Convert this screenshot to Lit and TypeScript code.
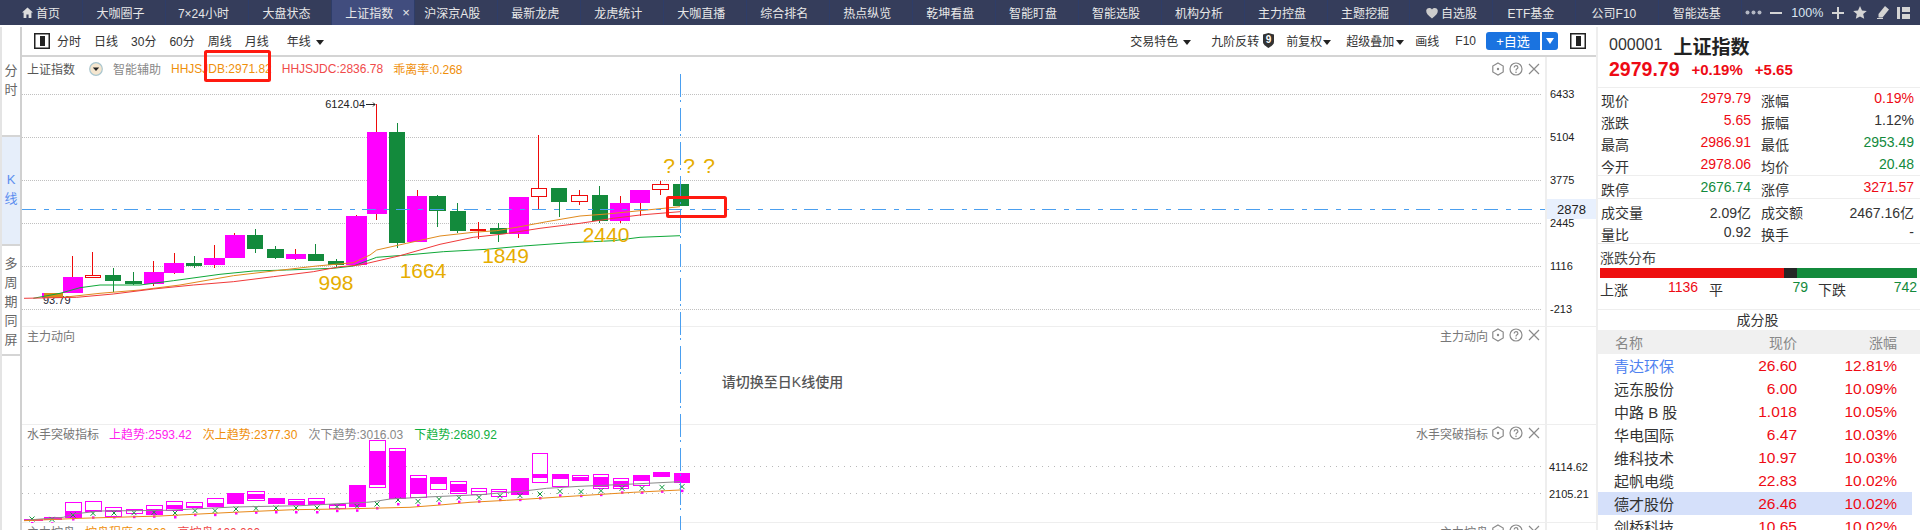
import { LitElement, html, css, svg } from "lit";
import { customElement } from "lit/decorators.js";

const MAG = "#ff00ff", GRN = "#138a3c", RED = "#ee0a0a", GOLD = "#e6ad00";
const X = (z: number) => z / 3;
const Y1 = (z: number) => 110 + z / 3;
const Y3 = (z: number) => 410 + z / 3;

type C = [string, number, number, number, number, number, number, number];
// type, left, right, top, bottom, wickX, wickTop, wickBottom (3x crop units)
const candles: C[] = [
  ["m", 127, 188, 549, 565, 157, 549, 565],
  ["m", 189, 249, 501, 549, 217, 438, 549],
  ["r", 255, 303, 495, 503, 277, 426, 503],
  ["g", 315, 363, 495, 513, 340, 474, 546],
  ["g", 375, 426, 513, 522, 400, 486, 525],
  ["m", 432, 492, 486, 522, 460, 453, 528],
  ["m", 492, 552, 459, 489, 523, 429, 492],
  ["g", 558, 606, 459, 468, 583, 438, 474],
  ["m", 612, 675, 444, 465, 643, 405, 474],
  ["m", 675, 735, 375, 444, 703, 369, 444],
  ["g", 741, 789, 375, 417, 766, 357, 429],
  ["g", 801, 852, 417, 444, 826, 408, 447],
  ["m", 858, 918, 432, 447, 886, 417, 450],
  ["g", 924, 972, 432, 453, 946, 402, 453],
  ["g", 984, 1032, 453, 465, 1009, 447, 472],
  ["m", 1038, 1101, 318, 465, 1069, 315, 465],
  ["m", 1101, 1161, 66, 312, 1130, -18, 330],
  ["g", 1167, 1215, 66, 399, 1192, 39, 414],
  ["m", 1221, 1281, 258, 396, 1252, 240, 396],
  ["g", 1287, 1338, 258, 303, 1312, 255, 351],
  ["g", 1350, 1398, 303, 363, 1372, 279, 369],
  ["r", 1410, 1458, 357, 363, 1435, 336, 387],
  ["g", 1470, 1521, 354, 372, 1495, 339, 396],
  ["m", 1527, 1587, 261, 372, 1555, 261, 384],
  ["r", 1593, 1641, 234, 261, 1615, 75, 297],
  ["g", 1653, 1701, 234, 276, 1678, 234, 321],
  ["r", 1713, 1764, 255, 276, 1738, 240, 285],
  ["g", 1776, 1824, 255, 333, 1798, 228, 339],
  ["m", 1830, 1890, 279, 333, 1861, 258, 339],
  ["m", 1890, 1950, 240, 279, 1922, 279, 318],
  ["r", 1956, 2007, 222, 240, 1981, 213, 255],
  ["g", 2019, 2067, 222, 288, 2041, 222, 288],
];

const pts = (a: number[][], fy: (n: number) => number) =>
  a.map(([x, y]) => `${X(x).toFixed(1)},${fy(y).toFixed(1)}`).join(" ");

const maRed = [[72,565],[230,562],[340,552],[460,537],[580,525],[700,515],[820,500],[940,485],[1020,470],[1080,465],[1200,437],[1320,403],[1420,382],[1510,372],[1620,355],[1740,340],[1840,325],[1920,315],[2040,305]];
const maOrg = [[190,562],[300,550],[420,540],[540,525],[700,497],[820,483],[950,468],[1060,458],[1110,435],[1130,420],[1220,400],[1320,378],[1420,367],[1490,362],[1560,350],[1640,335],[1740,318],[1820,312],[1940,300],[2040,290]];
const maGrn = [[100,565],[180,550],[240,533],[300,525],[420,525],[520,512],[660,493],[760,483],[860,480],[1000,475],[1060,468],[1130,442],[1220,435],[1330,425],[1460,418],[1570,408],[1710,398],[1840,392],[1920,382],[2040,377]];

const boxes: number[][] = [
  [72,130,330,336,330,336],[133,186,324,333,324,333],[195,245,280,327,306,327],[255,305,277,309,304,309],
  [316,366,295,325,304,310],[378,428,301,317,304,306],[438,488,289,319,300,318],[498,548,277,307,288,300],
  [558,610,280,297,290,294],[621,671,268,295,283,292],[681,731,253,286,253,286],[741,795,247,278,255,270],
  [804,854,267,286,267,284],[864,914,271,288,276,284],[925,977,268,288,276,285],[987,1037,285,299,285,290],
  [1047,1097,228,293,228,293],[1107,1157,94,239,126,228],[1168,1220,118,271,126,271],[1230,1280,199,269,207,256],
  [1290,1340,205,245,205,225],[1351,1403,217,255,225,250],[1414,1462,238,260,247,250],[1474,1522,241,265,246,250],
  [1533,1587,208,260,208,260],[1597,1646,133,223,195,207],[1657,1707,196,234,196,212],[1717,1767,199,218,204,213],
  [1780,1828,196,241,204,235],[1840,1888,208,240,216,235],[1900,1950,199,232,199,216],[1960,2012,190,206,190,202],
  [2023,2072,193,224,193,219],
];
const marks = [[97,330],[157,331],[220,318],[280,313],[341,312],[402,311],[463,310],[525,312],[585,305],[646,305],[707,300],[767,298],[828,297],[889,297],[950,297],[1011,293],[1072,292],[1132,285],[1193,273],[1255,277],[1316,271],[1377,266],[1438,265],[1499,260],[1560,260],[1621,255],[1681,247],[1743,248],[1804,245],[1865,238],[1926,238],[1986,235],[2047,233]];
const grayL = [[72,334],[190,325],[220,315],[300,306],[500,304],[700,294],[900,290],[1100,280],[1120,278],[1170,270],[1280,264],[1440,257],[1580,245],[1640,238],[1740,232],[1900,225],[2040,218]];
const orgL = [[72,335],[240,328],[480,321],[700,310],[880,302],[1020,300],[1230,295],[1320,288],[1410,280],[1520,274],[1620,268],[1740,260],[1900,250],[2040,243]];

const tabs = ["首页","大咖圈子","7×24小时","大盘状态","上证指数","沪深京A股","最新龙虎","龙虎统计","大咖直播","综合排名","热点纵览","乾坤看盘","智能盯盘","智能选股","机构分析","主力控盘","主题挖掘","自选股","ETF基金","公司F10","智能选基"];
const quote: [string, string, string, string, string, string][] = [
  ["现价","2979.79","r","涨幅","0.19%","r"],
  ["涨跌","5.65","r","振幅","1.12%","k"],
  ["最高","2986.91","r","最低","2953.49","g"],
  ["今开","2978.06","r","均价","20.48","g"],
];
const stocks: [string, string, string][] = [
  ["青达环保","26.60","12.81%"],["远东股份","6.00","10.09%"],["中路 B 股","1.018","10.05%"],["华电国际","6.47","10.03%"],
  ["维科技术","10.97","10.03%"],["起帆电缆","22.83","10.02%"],["德才股份","26.46","10.02%"],["剑桥科技","10.65","10.02%"],
];

const toolIcons = html`
  <svg width="14" height="14" viewBox="0 0 14 14" fill="none" stroke="#8a8a8a" stroke-width="1.2"><path d="M7 1l5.2 3v6L7 13l-5.2-3V4z"/><circle cx="7" cy="7" r="1.2" fill="#8a8a8a" stroke="none"/></svg>
  <svg width="14" height="14" viewBox="0 0 14 14" fill="none" stroke="#8a8a8a" stroke-width="1.2"><circle cx="7" cy="7" r="6"/><path d="M5.2 5.4c0-2.300 3.700-2.300 3.700 0 0 1.500-1.900 1.400-1.900 3"/><circle cx="7" cy="10.200" r=".8" fill="#8a8a8a" stroke="none"/></svg>
  <svg width="14" height="14" viewBox="0 0 14 14" fill="none" stroke="#8a8a8a" stroke-width="1.2"><path d="M2 2l10 10M12 2L2 12"/></svg>`;
const panelIcon = html`<svg class="pi" width="16" height="16" viewBox="0 0 16 16"><rect x=".75" y=".75" width="14.500" height="14.500" fill="#fff" stroke="#222" stroke-width="1.500"/><rect x="6" y="3" width="5" height="10" fill="#222"/></svg>`;
const grid = (ys: number[], dash: string, color: string) =>
  ys.map((y) => svg`<line x1="22" x2="1541" y1=${y + 0.5} y2=${y + 0.5} stroke=${color} stroke-dasharray=${dash}/>`);

@customElement("app-root")
export class AppRoot extends LitElement {
  static styles = css`
    :host { display: block; width: 1920px; height: 530px; overflow: hidden; background: #fff; position: relative;
      font-family: "Liberation Sans", "Noto Sans CJK SC", sans-serif; font-size: 12px; color: #333; }
    * { box-sizing: border-box; }
    .tabs { display: flex; height: 25px; background: #353d5b; color: #e8e8e8; align-items: stretch; }
    .tab { width: 82.97px; flex: none; display: flex; align-items: center; justify-content: center; gap: 3px;
      padding-right: 7px; border-right: 1px solid #2e3d68; white-space: nowrap; position: relative; }
    .tab.ic { padding-right: 0; }
    .tab.on { background: #414d7e; }
    .tab .x { position: absolute; right: 4px; top: 6px; font-size: 13px; line-height: 13px; }
    .chrome { flex: 1; display: flex; align-items: center; padding-left: 3px; color: #dbe6f2; }
    .chrome svg { flex: none; }
    .chrome span { margin: 0 9px 0 9px; font-size: 12.500px; }
    .gap { height: 2px; }
    .body { display: flex; height: 503px; }
    .side { width: 22px; flex: none; border-left: 2px solid #e4e4e4; border-right: 2px solid #d0d0d0; display: flex; flex-direction: column; }
    .side div { height: 109.500px; flex: none; display: flex; flex-direction: column; align-items: center; justify-content: center;
      gap: 6px; color: #666; font-size: 13px; line-height: 13px; border-bottom: 2px solid #d5d5d5; padding-bottom: 2px; }
    .side div.on { background: #e6eefa; color: #5b8def; }
    .side div.tall { padding-bottom: 0; padding-top: 3px; }
    .main { width: 1574px; flex: none; display: flex; flex-direction: column; position: relative; }
    .bar { height: 30px; flex: none; border-bottom: 2px solid #d4d4d4; display: flex; align-items: center; padding-left: 12px; padding-bottom: 1px; }
    .bar .pi { margin-right: 7px; display: block; }
    .bar .it { margin-left: 13px; }
    .bar .it:first-of-type { margin-left: 0; }
    .bar .sp { flex: 1; }
    .caret { display: inline-block; width: 0; height: 0; border: 4px solid transparent; border-top: 5px solid #222; border-bottom: 0; margin-left: 5px; vertical-align: middle; }
    .add { width: 54px; height: 18px; background: #1a73e0; color: #fff; border-radius: 3px 0 0 3px; display: flex; align-items: center; justify-content: center; font-size: 13px; margin-left: 10px; }
    .dd { width: 16px; height: 18px; background: #1a73e0; border-radius: 0 3px 3px 0; margin: 0 12px 0 2px; display: flex; align-items: center; justify-content: center; }
    .dd i { border: 4.500px solid transparent; border-top: 6px solid #fff; border-bottom: 0; }
    .pane { position: relative; flex: none; border-bottom: 1px solid #eee; }
    .p1 { height: 270px; } .p2 { height: 98px; } .p3 { height: 98px; } .p4 { flex: 1; border-bottom: 0; }
    .pane > svg { position: absolute; left: 0; top: 0; }
    .hd { position: relative; display: flex; align-items: center; height: 16px; padding: 0 55px 0 5px; white-space: nowrap; color: #777; }
    .hd .n { color: #555; margin-right: 14px; }
    .hd .v { margin-right: 11px; }
    .hd .sp { flex: 1; }
    .hd .ttl { color: #777; margin-right: 3px; }
    .tools { display: flex; gap: 4px; align-items: center; }
    .tip { position: absolute; left: 0; right: 50px; top: 47px; text-align: center; font-size: 14px; line-height: 16px; color: #555; font-weight: 500; padding-right: 3px; }
    .axis { position: absolute; top: 0; bottom: 0; right: 0; width: 51px; border-left: 2px solid #eee; }
    .over { position: absolute; left: 0; top: 0; pointer-events: none; }
    .panel { width: 324px; flex: none; border-left: 2px solid #eee; font-size: 14px; overflow: hidden; }
    .head { height: 61px; border-bottom: 1px solid #eee; padding: 6px 0 0 11px; }
    .head .l1 { display: flex; align-items: center; height: 24px; }
    .head .code { font-size: 16px; margin-right: 11px; }
    .head .nm { font-size: 19px; font-weight: 700; color: #222; }
    .head .l2 { display: flex; align-items: center; height: 24px; color: #ee0a14; font-weight: 700; }
    .head .pr { font-size: 19.500px; margin-right: 12px; }
    .head .ch { font-size: 15px; margin-right: 12px; }
    .qs { border-bottom: 1px solid #eee; padding-left: 3px; display: grid; grid-template-columns: 150px 153px; column-gap: 10px; grid-auto-rows: 22px; align-items: center; }
    .q1 { height: 88px; padding-top: 1px; } .q2 { height: 23px; padding-top: 2px; } .q3 { height: 45px; padding-top: 2px; }
    .cell { display: flex; justify-content: space-between; white-space: nowrap; }
    .r { color: #ee0a14; } .g { color: #138a3c; } .k { color: #333; }
    .dist { height: 66px; border-bottom: 1px solid #eee; padding: 4px 3px 0 2px; }
    .dist .t { height: 20px; line-height: 20px; color: #444; }
    .dist .b { height: 10px; display: flex; }
    .dist .b i { display: block; }
    .dist .row { display: grid; grid-template-columns: 98px 11px 99px 10px 99px; height: 22px; align-items: center; }
    .dist .row span { display: flex; justify-content: space-between; }
    .dist .row b { font-weight: 400; }
    .cf { height: 20px; line-height: 20px; text-align: center; padding-right: 3px; color: #333; }
    .th, .tr { display: grid; grid-template-columns: 112px 71px 100px; padding-left: 16px; align-items: center; }
    .th { height: 24px; background: #f0f0f0; color: #888; padding-left: 17px; grid-template-columns: 111px 71px 100px; }
    .tr { height: 23px; font-size: 15px; width: 314px; }
    .tr.sel { background: #d5e0fa; }
    .nr { text-align: right; }
    .tr .nr { color: #ee0a14; font-size: 15.500px; }
    .tr .bl { color: #4f82f0; }
  `;

  chart1() {
    return svg`<svg width="1574" height="270" viewBox="22 57 1574 270" font-family="Liberation Sans, Noto Sans CJK SC, sans-serif">
      ${grid([94,137,180,223,266,309], "1 1", "#c0c0c0")}
      <text x="365" y="108" text-anchor="end" font-size="11" fill="#222">6124.04</text>
      <path d="M366 104.500h9m-2-2l2 2-2 2" fill="none" stroke="#222"/>
      <text x="43" y="304" font-size="11" fill="#223">93.79</text>
      ${candles.map(([t, l, r, a, b, wx, wt, wb]) => {
        const col = t === "g" ? GRN : t === "r" ? RED : MAG;
        const wc = t === "g" ? GRN : RED;
        return svg`<g shape-rendering="crispEdges">
          <rect x=${Math.floor(X(wx))} y=${Y1(wt)} width="1" height=${(wb - wt) / 3} fill=${wc}/>
          ${t === "r"
            ? svg`<rect x=${X(l) + 0.5} y=${Y1(a) + 0.5} width=${(r - l) / 3 - 1} height=${(b - a) / 3 - 1} fill="#fff" stroke=${RED}/>`
            : svg`<rect x=${X(l)} y=${Y1(a)} width=${(r - l) / 3} height=${(b - a) / 3} fill=${col}/>`}
        </g>`;
      })}
      <rect x="44" y="293" width="18.500" height="4.500" fill="#d98a1a" shape-rendering="crispEdges"/>
      <polyline points=${pts(maGrn, Y1)} fill="none" stroke="#0fa838" stroke-width="1"/>
      <polyline points=${pts(maOrg, Y1)} fill="none" stroke="#e08a1e" stroke-width="1"/>
      <polyline points=${pts(maRed, Y1)} fill="none" stroke="#f03a3a" stroke-width="1"/>
      <g font-size="21" fill=${GOLD} text-anchor="middle">
        <text x="336" y="290">998</text>
        <text x="423" y="278">1664</text>
        <text x="505.500" y="263">1849</text>
        <text x="606" y="242">2440</text>
        <text x="669" y="173">?</text><text x="689" y="173">?</text><text x="709" y="173">?</text>
      </g>
      <g font-size="11" fill="#222">
        <text x="1550" y="98">6433</text><text x="1550" y="141">5104</text><text x="1550" y="184">3775</text>
        <text x="1550" y="227">2445</text><text x="1550" y="270">1116</text><text x="1550" y="313">-213</text>
      </g>
      <rect x="1547" y="199" width="49" height="20" fill="#e8f0fd"/>
      <text x="1557" y="214" font-size="13" fill="#222">2878</text>
    </svg>`;
  }

  chart3() {
    return svg`<svg width="1574" height="98" viewBox="22 426 1574 98" font-family="Liberation Sans, Noto Sans CJK SC, sans-serif">
      ${grid([467,494], "1 5", "#b8b8b8")}
      <g shape-rendering="crispEdges">
        ${boxes.map(([l, r, t, b, ft, fb]) => svg`
          <rect x=${Math.round(X(l)) + 0.5} y=${Math.round(Y3(t)) + 0.5} width=${Math.round((r - l) / 3) - 1} height=${Math.max(1, Math.round((b - t) / 3) - 1)} fill="#fff" stroke=${MAG}/>
          <rect x=${Math.round(X(l))} y=${Math.round(Y3(ft))} width=${Math.round((r - l) / 3)} height=${Math.round((fb - ft) / 3)} fill=${MAG}/>`)}
      </g>
      ${marks.map(([x, y]) => {
        const cx = Math.round(X(x)), cy = Y3(y);
        return svg`<path d="M${cx - 2.5} ${cy - 2.5}l5 5m0 -5l-5 5" stroke="#0f9a3c" fill="none"/>
          <rect x=${cx - 1} y=${cy + 3} width="2.500" height="2.500" fill=${MAG}/>`;
      })}
      <polyline points=${pts(grayL, Y3)} fill="none" stroke="#8a8a8a" stroke-width="1"/>
      <polyline points=${pts(orgL, Y3)} fill="none" stroke="#e8891a" stroke-width="1"/>
      <g font-size="11" fill="#222"><text x="1549" y="472">4114.62</text><text x="1549" y="499">2105.21</text></g>
    </svg>`;
  }

  overlay() {
    return svg`<svg class="over" width="1574" height="503" viewBox="22 27 1574 503">
      <line x1="22" x2="1546" y1="209.500" y2="209.500" stroke="#4a9ff0" stroke-dasharray="14 8 5 7"/>
      <line x1="680.500" x2="680.500" y1="74" y2="530" stroke="#4a9ff0" stroke-dasharray="23 3 2 6"/>
      <rect x="667.500" y="197.500" width="58" height="19" rx="1" fill="none" stroke="#ff1a10" stroke-width="3"/>
      <rect x="205.500" y="51.500" width="64" height="29" rx="1" fill="none" stroke="#ff1a10" stroke-width="3"/>
    </svg>`;
  }

  tabIcon(i: number) {
    if (i === 0) return html`<svg width="11" height="11" viewBox="0 0 11 11"><path d="M5.500 .5L0 5.500h1.600V11h2.800V7.500h2.200V11h2.800V5.500H11z" fill="#ddd"/></svg>`;
    if (i === 17) return html`<svg width="12" height="12" viewBox="0 0 12 12"><path d="M6 11.500C2 8.500 .2 6.500 .2 3.800.2 .9 4 -.2 6 2.400 8 -.2 11.800 .9 11.800 3.800c0 2.700-1.800 4.700-5.800 7.700z" fill="#ccc"/></svg>`;
    return "";
  }

  render() {
    return html`
      <div class="tabs">
        ${tabs.map((t, i) => html`<div class="tab ${i === 4 ? "on" : ""} ${i === 0 || i === 17 ? "ic" : ""}">${this.tabIcon(i)}${t}${i === 4 ? html`<span class="x">×</span>` : ""}</div>`)}
        <div class="chrome">
          <svg width="17" height="5" viewBox="0 0 17 5" fill="#b4b8c4"><circle cx="2.500" cy="2.500" r="2"/><circle cx="8.500" cy="2.500" r="2"/><circle cx="14.500" cy="2.500" r="2"/></svg>
          <svg width="12" height="2" viewBox="0 0 12 2" style="margin-left:8px" fill="#d4d4d4"><rect width="12" height="2"/></svg>
          <span>100%</span>
          <svg width="12" height="12" viewBox="0 0 12 12" fill="#d4d4d4"><path d="M5 0h2v5h5v2H7v5H5V7H0V5h5z"/></svg>
          <svg width="14" height="13" viewBox="0 0 14 13" style="margin-left:9px" fill="#d4d4d4"><path d="M7 0l2 4.400 4.800.5-3.600 3.200 1 4.700L7 10.400 2.800 12.800l1-4.700L.2 4.900 5 4.400z"/></svg>
          <svg width="12" height="13" viewBox="0 0 12 13" style="margin-left:10px" fill="#d4d4d4"><path d="M8 0l4 3.500-6.500 8H1.500V8zM0 12h6v1H0z"/></svg>
          <svg width="13" height="12" viewBox="0 0 13 12" style="margin-left:8px" fill="#d4d4d4"><path d="M0 0h3v12H0zM5 0h8v5H5zM5 7h8v5H5z"/></svg>
        </div>
      </div>
      <div class="gap"></div>
      <div class="body">
        <div class="side">
          <div><span>分</span><span>时</span></div>
          <div class="on"><span>K</span><span>线</span></div>
          <div class="tall"><span>多</span><span>周</span><span>期</span><span>同</span><span>屏</span></div>
        </div>
        <div class="main">
          <div class="bar">
            ${panelIcon}
            <span class="it">分时</span><span class="it">日线</span><span class="it">30分</span><span class="it">60分</span><span class="it">周线</span><span class="it">月线</span>
            <span class="it" style="margin-left:18px">年线<i class="caret"></i></span>
            <span class="sp"></span>
            <span class="it">交易特色<i class="caret"></i></span>
            <span class="it" style="margin-left:20px">九阶反转</span>
            <svg width="11" height="15" viewBox="0 0 11 15" style="margin-left:4px"><path d="M0 1.500L5.500 0 11 1.500V9c0 2.500-3 4.500-5.500 6C3 13.500 0 11.500 0 9z" fill="#333"/><text x="5.500" y="10" font-size="10" font-weight="700" text-anchor="middle" fill="#fff">9</text></svg>
            <span class="it" style="margin-left:12px">前复权<i class="caret" style="margin-left:1px"></i></span>
            <span class="it" style="margin-left:15px">超级叠加<i class="caret" style="margin-left:2px"></i></span>
            <span class="it" style="margin-left:11px">画线</span>
            <span class="it" style="margin-left:16px">F10</span>
            <div class="add">+自选</div><div class="dd"><i></i></div>
            <span style="margin-right:3px">${panelIcon}</span>
          </div>
          <div class="pane p1">
            ${this.chart1()}
            <div class="axis"></div>
            <div class="hd" style="padding-top:3px;height:20px">
              <span class="n">上证指数</span>
              <svg width="14" height="14" viewBox="0 0 14 14" style="margin-right:10px"><circle cx="7" cy="7" r="6.300" fill="#f5e6cf" stroke="#a9c6cf" stroke-width="1.200"/><path d="M3.800 5.500h6.400L7 9z" fill="#222"/></svg>
              <span class="v" style="color:#888;margin-right:10px">智能辅助</span>
              <span class="v" style="color:#ef8f0a;margin-right:10px">HHJSJDB:2971.82</span>
              <span class="v" style="color:#f04a4a;margin-right:10px">HHJSJDC:2836.78</span>
              <span class="v" style="color:#ef8f0a">乖离率:0.268</span>
              <span class="sp"></span><span class="tools">${toolIcons}</span>
            </div>
          </div>
          <div class="pane p2">
            <div class="axis"></div>
            <div class="hd"><span class="n" style="color:#777">主力动向</span><span class="sp"></span><span class="ttl">主力动向</span><span class="tools">${toolIcons}</span></div>
            <div class="tip">请切换至日K线使用</div>
          </div>
          <div class="pane p3">
            ${this.chart3()}
            <div class="axis"></div>
            <div class="hd">
              <span class="n" style="color:#777;margin-right:10px">水手突破指标</span>
              <span class="v" style="color:#ff22ee">上趋势:2593.42</span>
              <span class="v" style="color:#ef8f0a">次上趋势:2377.30</span>
              <span class="v" style="color:#888">次下趋势:3016.03</span>
              <span class="v" style="color:#10b040">下趋势:2680.92</span>
              <span class="sp"></span><span class="ttl">水手突破指标</span><span class="tools">${toolIcons}</span>
            </div>
          </div>
          <div class="pane p4">
            <div class="axis"></div>
            <div class="hd">
              <span class="n" style="color:#777;margin-right:10px">主力控盘</span>
              <span class="v" style="color:#ef8f0a">控盘程度:0.000</span>
              <span class="v" style="color:#f04a4a">高控盘:100.000</span>
              <span class="sp"></span><span class="ttl">主力控盘</span><span class="tools">${toolIcons}</span>
            </div>
          </div>
          ${this.overlay()}
        </div>
        <div class="panel">
          <div class="head">
            <div class="l1"><span class="code">000001</span><span class="nm">上证指数</span></div>
            <div class="l2"><span class="pr">2979.79</span><span class="ch">+0.19%</span><span class="ch">+5.65</span></div>
          </div>
          <div class="qs q1">
            ${quote.map((q) => html`
              <div class="cell"><span>${q[0]}</span><span class=${q[2]}>${q[1]}</span></div>
              <div class="cell"><span>${q[3]}</span><span class=${q[5]}>${q[4]}</span></div>`)}
          </div>
          <div class="qs q2">
            <div class="cell"><span>跌停</span><span class="g">2676.74</span></div>
            <div class="cell"><span>涨停</span><span class="r">3271.57</span></div>
          </div>
          <div class="qs q3">
            <div class="cell"><span>成交量</span><span>2.09亿</span></div>
            <div class="cell"><span>成交额</span><span>2467.16亿</span></div>
            <div class="cell"><span>量比</span><span>0.92</span></div>
            <div class="cell"><span>换手</span><span>-</span></div>
          </div>
          <div class="dist">
            <div class="t">涨跌分布</div>
            <div class="b"><i style="width:184px;background:#ee0f0f"></i><i style="width:13px;background:#262626"></i><i style="width:120px;background:#138a3c"></i></div>
            <div class="row">
              <span>上涨<b class="r">1136</b></span><i></i>
              <span>平<b class="g">79</b></span><i></i>
              <span>下跌<b class="g">742</b></span>
            </div>
          </div>
          <div class="cf">成分股</div>
          <div class="th"><span>名称</span><span class="nr">现价</span><span class="nr">涨幅</span></div>
          ${stocks.map((s, i) => html`<div class="tr ${i === 6 ? "sel" : ""}"><span class=${i === 0 ? "bl" : ""}>${s[0]}</span><span class="nr">${s[1]}</span><span class="nr">${s[2]}</span></div>`)}
        </div>
      </div>
    `;
  }
}
